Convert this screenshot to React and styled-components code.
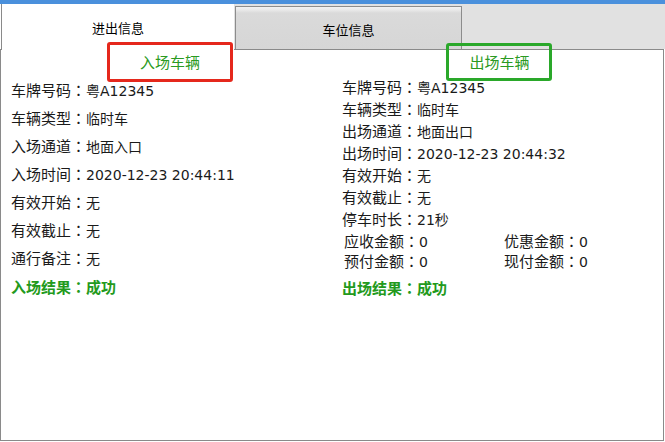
import React from "react";
import styled, { createGlobalStyle } from "styled-components";

const Global = createGlobalStyle`
  html, body { margin: 0; padding: 0; background: #ffffff; }
  body { font-family: "Noto Sans CJK SC", sans-serif; color: #1a1a1a; }
`;

const Window = styled.div`
  width: 665px;
  height: 442px;
  background: #ffffff;
  display: flex;
  flex-direction: column;
`;

const TopBar = styled.div`
  height: 4px;
  background: #4a90dc;
  flex: none;
`;

const TabStrip = styled.div`
  height: 45px;
  flex: none;
  display: flex;
  align-items: flex-start;
  background: #e1e1e1;
  border-left: 1px solid #ffffff;
`;

const ActiveTab = styled.div`
  position: relative;
  z-index: 1;
  width: 233px;
  height: 46px;
  margin-bottom: -1px;
  background: #ffffff;
  border-left: 1px solid #8a8a8a;
  text-align: center;
  font-size: 13px;
  line-height: 18px;
  padding-top: 15px;
  box-sizing: border-box;
  color: #000;
`;

const Tab = styled.div`
  width: 227px;
  height: 43px;
  margin-top: 2px;
  margin-left: 1px;
  box-sizing: border-box;
  border: 1px solid #8c8c8c;
  border-bottom: none;
  background: linear-gradient(#f2f2f2 0px, #e9e9e9 3px, #dadada 6px, #d6d6d6 100%);
  text-align: center;
  font-size: 13px;
  line-height: 18px;
  padding-top: 14px;
  color: #000;
`;

const Panel = styled.div`
  position: relative;
  height: 392px;
  margin-right: 1px;
  box-sizing: border-box;
  border: 1px solid #8a8a8a;
  display: grid;
  grid-template-columns: 341px 1fr;
  align-items: start;
`;

const Column = styled.div`
  display: flex;
  flex-direction: column;
`;

const TitleRow = styled.div`
  height: 24px;
  display: flex;
  justify-content: center;
  padding-right: ${(p) => p.$shift || 0}px;
`;

const Title = styled.div`
  position: relative;
  z-index: 2;
  font-size: 15px;
  line-height: 24px;
  color: #2a9a22;
  &::after {
    content: "";
    position: absolute;
    left: 50%;
    top: 50%;
    width: ${(p) => p.$w}px;
    height: ${(p) => p.$h}px;
    transform: translate(-50%, -50%);
    box-sizing: border-box;
    border: 3px solid ${(p) => p.$frame};
    border-radius: 3px;
  }
`;

const List = styled.div`
  display: flex;
  flex-direction: column;
  padding-left: ${(p) => p.$pad}px;
  margin-top: ${(p) => p.$top}px;
`;

const Field = styled.div`
  display: flex;
  align-items: baseline;
  height: ${(p) => p.$h}px;
  line-height: ${(p) => p.$h}px;
  white-space: nowrap;
`;

const Label = styled.span`
  font-family: "Noto Sans CJK SC", sans-serif;
  font-size: 15px;
`;

const Colon = styled.span`
  display: inline-block;
  width: 15px;
  text-align: center;
  font-family: "Noto Sans CJK TC", sans-serif;
  font-size: 15px;
`;

const Value = styled.span`
  font-family: "DejaVu Sans", "Noto Sans CJK SC", sans-serif;
  font-size: 14px;
`;

const Result = styled.div`
  display: flex;
  align-items: baseline;
  height: ${(p) => p.$h}px;
  line-height: ${(p) => p.$h}px;
  margin-top: ${(p) => p.$top}px;
  font-size: 15px;
  font-weight: 700;
  color: #239a1c;
`;

const FeeGrid = styled.div`
  display: grid;
  grid-template-columns: 160px 160px;
  padding-left: 2px;
  margin-top: 1px;
`;

const entryFields = [
  ["车牌号码", "粤A12345"],
  ["车辆类型", "临时车"],
  ["入场通道", "地面入口"],
  ["入场时间", "2020-12-23 20:44:11"],
  ["有效开始", "无"],
  ["有效截止", "无"],
  ["通行备注", "无"],
];

const exitFields = [
  ["车牌号码", "粤A12345"],
  ["车辆类型", "临时车"],
  ["出场通道", "地面出口"],
  ["出场时间", "2020-12-23 20:44:32"],
  ["有效开始", "无"],
  ["有效截止", "无"],
  ["停车时长", "21秒"],
];

const fees = [
  ["应收金额", "0"],
  ["优惠金额", "0"],
  ["预付金额", "0"],
  ["现付金额", "0"],
];

function Row({ label, value, h }) {
  return (
    <Field $h={h}>
      <Label>{label}</Label>
      <Colon>：</Colon>
      <Value>{value}</Value>
    </Field>
  );
}

export default function App() {
  return (
    <>
      <Global />
      <Window>
        <TopBar />
        <TabStrip>
          <ActiveTab>进出信息</ActiveTab>
          <Tab>车位信息</Tab>
        </TabStrip>
        <Panel>
          <Column>
            <TitleRow $shift={3}>
              <Title $w={126} $h={40} $frame="#e5281c">入场车辆</Title>
            </TitleRow>
            <List $pad={10} $top={2}>
              {entryFields.map(([l, v]) => (
                <Row key={l} label={l} value={v} h={28} />
              ))}
              <Result $h={28} $top={1}>
                入场结果<Colon>：</Colon>成功
              </Result>
            </List>
          </Column>
          <Column>
            <TitleRow $shift={7}>
              <Title $w={106} $h={38} $frame="#2aa82a">出场车辆</Title>
            </TitleRow>
            <List $pad={0} $top={2}>
              {exitFields.map(([l, v]) => (
                <Row key={l} label={l} value={v} h={22} />
              ))}
              <FeeGrid>
                {fees.map(([l, v]) => (
                  <Row key={l} label={l} value={v} h={20} />
                ))}
              </FeeGrid>
              <Result $h={22} $top={6}>
                出场结果<Colon>：</Colon>成功
              </Result>
            </List>
          </Column>
        </Panel>
      </Window>
    </>
  );
}
